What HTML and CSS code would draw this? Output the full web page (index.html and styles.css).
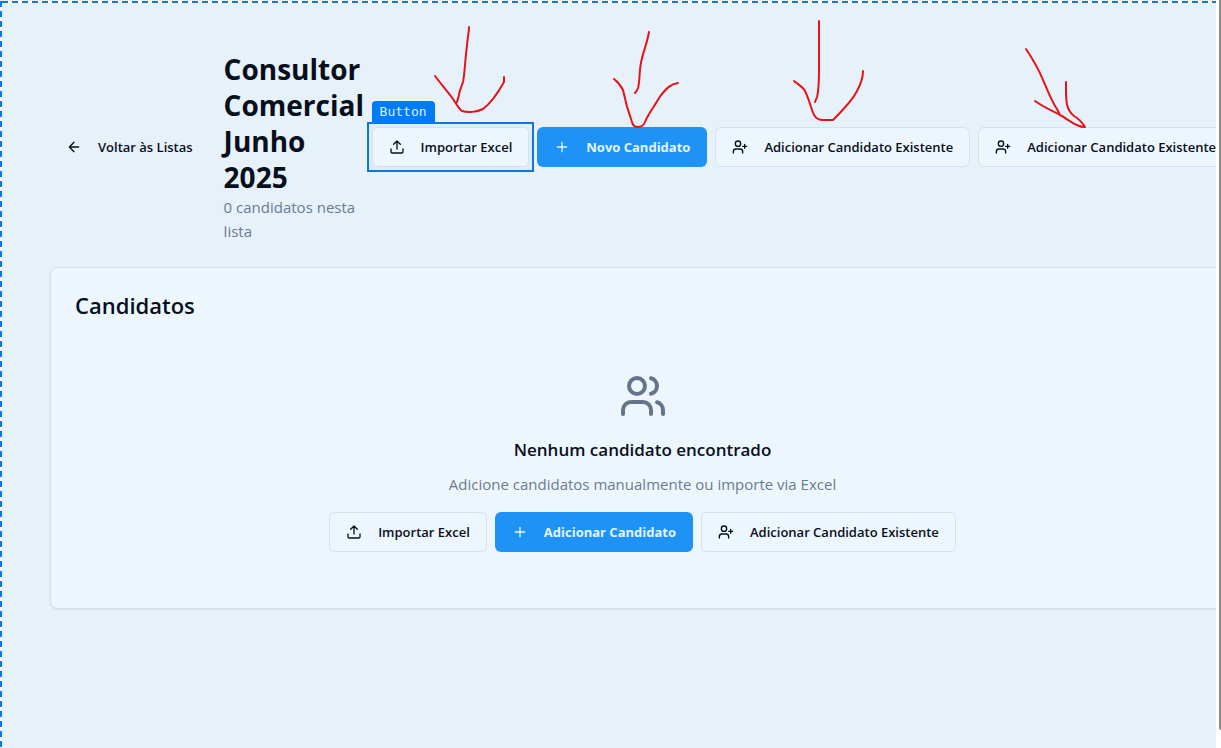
FILE: index.html
```
<!DOCTYPE html>
<html lang="pt-BR">
<head>
<meta charset="utf-8">
<meta name="viewport" content="width=device-width, initial-scale=1">
<title>Consultor Comercial Junho 2025</title>
<link rel="stylesheet" href="styles.css">
</head>
<body>
<svg class="defs" width="0" height="0" aria-hidden="true">
  <symbol id="i-upload" viewBox="0 0 24 24"><path d="M21 15v4a2 2 0 0 1-2 2H5a2 2 0 0 1-2-2v-4M17 8l-5-5-5 5M12 3v12"/></symbol>
  <symbol id="i-plus" viewBox="0 0 24 24"><path d="M5 12h14M12 5v14"/></symbol>
  <symbol id="i-user-plus" viewBox="0 0 24 24"><path d="M16 21v-2a4 4 0 0 0-4-4H6a4 4 0 0 0-4 4v2"/><circle cx="9" cy="7" r="4"/><path d="M19 8v6M22 11h-6"/></symbol>
  <symbol id="i-users" viewBox="0 0 24 24"><path d="M16 21v-2a4 4 0 0 0-4-4H6a4 4 0 0 0-4 4v2"/><circle cx="9" cy="7" r="4"/><path d="M22 21v-2a4 4 0 0 0-3-3.87M16 3.13a4 4 0 0 1 0 7.75"/></symbol>
  <symbol id="i-back" viewBox="0 0 24 24"><path d="M12 19l-7-7 7-7M19 12H5"/></symbol>
</svg>
<div class="frame">
  <main class="page">
    <header class="header">
      <button class="btn ghost" type="button"><svg class="icon"><use href="#i-back"/></svg>Voltar às Listas</button>
      <div class="heading">
        <h1>Consultor Comercial Junho 2025</h1>
        <p>0 candidatos nesta lista</p>
      </div>
      <div class="actions">
        <div class="selected">
          <span class="tag">Button</span>
          <button class="btn outline" type="button"><svg class="icon"><use href="#i-upload"/></svg>Importar Excel</button>
        </div>
        <button class="btn primary" type="button"><svg class="icon"><use href="#i-plus"/></svg>Novo Candidato</button>
        <button class="btn outline" type="button"><svg class="icon"><use href="#i-user-plus"/></svg>Adicionar Candidato Existente</button>
        <button class="btn outline" type="button"><svg class="icon"><use href="#i-user-plus"/></svg>Adicionar Candidato Existente</button>
      </div>
    </header>
    <section class="card">
      <h2>Candidatos</h2>
      <div class="empty">
        <svg class="empty-icon"><use href="#i-users"/></svg>
        <h3>Nenhum candidato encontrado</h3>
        <p>Adicione candidatos manualmente ou importe via Excel</p>
        <div class="actions">
          <button class="btn outline" type="button"><svg class="icon"><use href="#i-upload"/></svg>Importar Excel</button>
          <button class="btn primary" type="button"><svg class="icon"><use href="#i-plus"/></svg>Adicionar Candidato</button>
          <button class="btn outline" type="button"><svg class="icon"><use href="#i-user-plus"/></svg>Adicionar Candidato Existente</button>
        </div>
      </div>
    </section>
  </main>
  <div class="gutter"><div class="thumb"></div></div>
</div>
<svg class="marks" width="1221" height="200" aria-hidden="true">
  <path d="M469 27C469 34 467 40 467 46C465 59 465 72 463 82C461 88 459 92 459 95L457 102M435 76C441 84 448 92 453 99C457 105 459 109 462 111C468 113 477 112 483 109C491 103 499 91 504 82V77"/>
  <path d="M649 32C647 44 642 55 641 63C639 72 640 81 638 88Q637 91 635 93M614 79C618 82 621 86 623 90C625 100 629 114 632 122Q633 127 638 127Q643 127 645 122C648 114 654 107 659 98C666 88 671 84 678 83"/>
  <path d="M819 21V68Q819 90 817 97L815 102M794 81C799 85 803 87 805 91C809 99 811 108 814 115Q817 120 823 120H833C842 111 852 101 857 91Q863 80 863 71"/>
  <path d="M1026 49C1034 61 1039 70 1043 80C1048 91 1052 102 1057 109L1060 115M1035 101C1045 108 1053 111 1060 115C1068 119 1077 128 1085 127C1082 122 1079 119 1074 116C1065 109 1066 99 1066 82"/>
</svg>
</body>
</html>
```
FILE: styles.css
```
* { box-sizing: border-box; }
body {
  margin: 0;
  font-family: "Open Sans", "Noto Sans", sans-serif;
  font-size: 15px;
  line-height: 24px;
  color: #080f1c;
  background: #fff;
}
h1, h2, h3, p { margin: 0; }
svg { fill: none; stroke: currentColor; stroke-width: 2; stroke-linecap: round; stroke-linejoin: round; }
.defs { position: absolute; }
.frame { display: flex; min-height: 100vh; }
.page {
  flex: 1;
  min-width: 0;
  overflow: hidden;
  padding: 51px 0 24px 50px;
  background:
    repeating-linear-gradient(90deg, #1f78c1 0 6px, #fff 6px 10px) 2px 1px / 100% 2px no-repeat,
    repeating-linear-gradient(180deg, #0a78ee 0 6px, #fff 6px 10px) 0 1px / 2px 100% no-repeat,
    #e7f1fa;
}
.header { display: flex; align-items: center; }
.heading { width: 140px; margin: 0 8px 0 15px; flex: none; }
h1 { font-size: 28px; line-height: 36px; font-weight: 700; }
.heading p, .empty p { color: #697c92; }
.actions { display: flex; gap: 8px; }
.btn {
  display: inline-flex;
  align-items: center;
  gap: 16px;
  flex: none;
  height: 40px;
  padding: 0 16px;
  border: 1px solid transparent;
  border-radius: 6px;
  font: 600 13px/20px "Open Sans", "Noto Sans", sans-serif;
  color: inherit;
  white-space: nowrap;
}
.icon { width: 16px; height: 16px; flex: none; }
.ghost { background: none; border: 0; }
.outline { background: #eef6fd; border-color: #d5e1ee; }
.primary { background: #1f93f5; color: #e4f3ff; font-weight: 700; }
.selected { position: relative; }
.selected .btn { position: relative; }
.selected::before {
  content: "";
  position: absolute;
  inset: -5px;
  border: 2px solid #1275da;
  background: rgba(0, 160, 220, 0.04);
}
.tag {
  position: absolute;
  left: 0;
  bottom: 44px;
  padding: 0 8px;
  border-radius: 4px 4px 0 0;
  background: #007bf6;
  color: #dff1ff;
  font: 13px/22px "DejaVu Sans Mono", monospace;
}
.card {
  margin: 24px -19px 0 0;
  padding: 24px;
  border: 1px solid #d3dfea;
  border-radius: 8px;
  background: #eef6fd;
  box-shadow: 0 1px 2px rgba(20, 50, 80, 0.08);
}
h2 { font-size: 22px; line-height: 26px; font-weight: 600; }
.empty { display: flex; flex-direction: column; align-items: center; padding: 54px 0 32px; }
.empty-icon { width: 48px; height: 48px; margin-bottom: 16px; color: #64748b; }
h3 { font-size: 17px; line-height: 28px; font-weight: 600; margin-bottom: 8px; }
.empty p { margin-bottom: 16px; }
.gutter { width: 5px; padding-left: 3px; }
.thumb { height: calc(100vh - 18px); background: #8b8c88; border-radius: 0 0 0 2px; }
.marks { position: absolute; top: 0; left: 0; max-width: 100%; stroke: #e51419; pointer-events: none; }
```
